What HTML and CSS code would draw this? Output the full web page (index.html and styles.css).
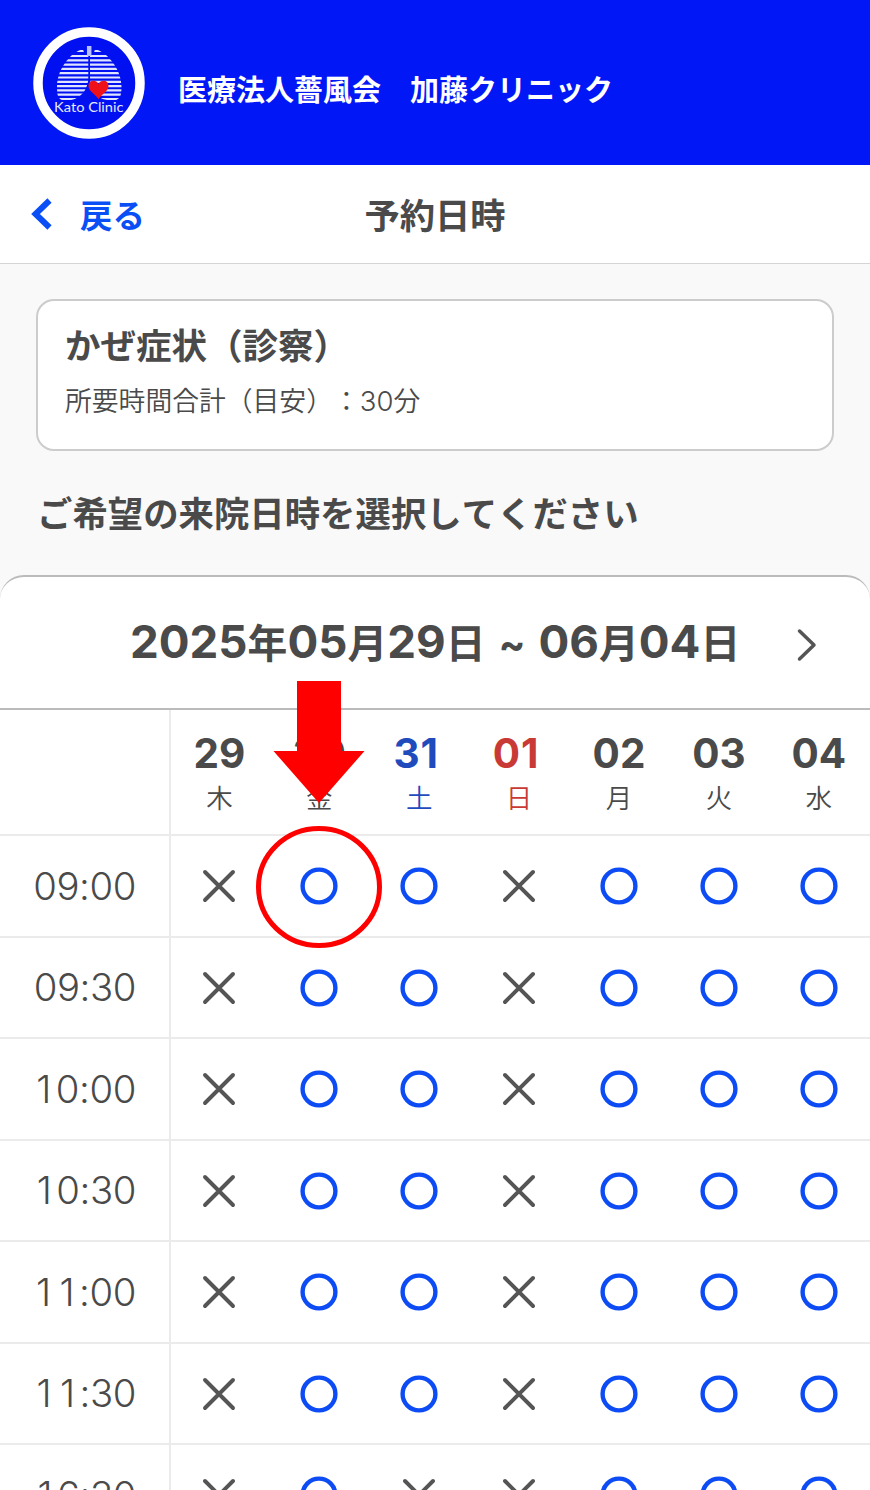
FILE: index.html
```html
<!DOCTYPE html>
<html lang="ja">
<head>
    <meta charset="UTF-8">
    <title>予約日時 | 加藤クリニック</title>
    <link rel="stylesheet" href="styles.css">
</head>
<body>
    <svg class="defs" width="0" height="0">
        <symbol id="ok" viewBox="0 0 40 40">
            <circle cx="20" cy="20" r="16.4" fill="none" stroke="#0d4cf5" stroke-width="4.4"/>
        </symbol>
        <symbol id="ng" viewBox="0 0 40 40">
            <path d="M6 6L34 34M34 6L6 34" fill="none" stroke="#555" stroke-width="3.9" stroke-linecap="round"/>
        </symbol>
    </svg>

    <header class="site-header">
        <svg class="logo" viewBox="33 27 112 112">
            <clipPath id="lungs">
                <path d="M83 49.500C75 49.500 57 66 57 87C57 96 58 100.500 66 100.500C80 100.500 88 90 88.300 78L88.300 55L85 55Z"/>
                <path d="M95 49.500C103 49.500 121.500 66 121.500 87C121.500 96 120 100.500 112 100.500C98 100.500 90.500 92 90 78L90 55L93 55Z"/>
            </clipPath>
            <circle cx="89" cy="83" r="51" fill="#0010f0" stroke="#fff" stroke-width="9.500"/>
            <path clip-path="url(#lungs)" stroke="#dfe3ff" stroke-width="2.200" d="M55 51H124M55 56H124M55 60.300H124M55 64.600H124M55 68.900H124M55 73.200H124M55 77.500H124M55 81.800H124M55 86.100H124M55 90.400H124M55 94.700H124M55 99H124"/>
            <path d="M89.200 46V56" stroke="#b9c0ff" stroke-width="4.500"/>
            <path d="M98.500 99C95 94 88.500 91 88.500 86C88.500 80 96 79 98.500 84C101 79 108.500 80 108.500 86C108.500 91 102 94 98.500 99Z" fill="#f01018"/>
            <text class="logo-text" x="54" y="111.500" textLength="69.500" lengthAdjust="spacingAndGlyphs">Kato Clinic</text>
        </svg>
        <h1>医療法人薔風会　加藤クリニック</h1>
    </header>

    <nav class="page-nav">
        <a class="back">
            <svg width="22" height="32" viewBox="0 0 22 32"><path d="M18.500 2.500L4.500 16L18.500 29.500" fill="none" stroke="#0a4ff5" stroke-width="6"/></svg>
            戻る
        </a>
        <h2>予約日時</h2>
    </nav>

    <main>
        <div class="menu-card">
            <h3>かぜ症状（診察）</h3>
            <p>所要時間合計（目安）：<span class="num">30</span>分</p>
        </div>
        <h3 class="lead">ご希望の来院日時を選択してください</h3>

        <section class="calendar">
            <div class="period">
                <p><span class="num">2025</span>年<span class="num">05</span>月<span class="num">29</span>日<span class="tilde">~</span><span class="num">06</span>月<span class="num">04</span>日</p>
                <svg class="next" width="22" height="34" viewBox="0 0 22 34"><path d="M3.500 3L18 17L3.500 31" fill="none" stroke="#555" stroke-width="3.500" stroke-linecap="round" stroke-linejoin="round"/></svg>
            </div>

            <div class="row days">
                <div class="time"></div>
                <div class="day"><b>29</b>木</div>
                <div class="day"><b>30</b>金</div>
                <div class="day sat"><b>31</b>土</div>
                <div class="day sun"><b>01</b>日</div>
                <div class="day"><b>02</b>月</div>
                <div class="day"><b>03</b>火</div>
                <div class="day"><b>04</b>水</div>
                <!-- 予約する枠の案内 -->
                <svg class="guide" width="130" height="272" viewBox="0 0 130 272">
                    <path d="M42 1H86V71H109.500L64 123L18.500 71H42Z" fill="#f00"/>
                    <ellipse cx="64" cy="207" rx="60.500" ry="58.500" fill="none" stroke="#f00" stroke-width="5"/>
                </svg>
            </div>
            <div class="row">
                <div class="time">09:00</div>
                <svg><use href="#ng"/></svg>
                <svg><use href="#ok"/></svg>
                <svg><use href="#ok"/></svg>
                <svg><use href="#ng"/></svg>
                <svg><use href="#ok"/></svg>
                <svg><use href="#ok"/></svg>
                <svg><use href="#ok"/></svg>
            </div>
            <div class="row">
                <div class="time">09:30</div>
                <svg><use href="#ng"/></svg>
                <svg><use href="#ok"/></svg>
                <svg><use href="#ok"/></svg>
                <svg><use href="#ng"/></svg>
                <svg><use href="#ok"/></svg>
                <svg><use href="#ok"/></svg>
                <svg><use href="#ok"/></svg>
            </div>
            <div class="row">
                <div class="time"><i>1</i>0:00</div>
                <svg><use href="#ng"/></svg>
                <svg><use href="#ok"/></svg>
                <svg><use href="#ok"/></svg>
                <svg><use href="#ng"/></svg>
                <svg><use href="#ok"/></svg>
                <svg><use href="#ok"/></svg>
                <svg><use href="#ok"/></svg>
            </div>
            <div class="row">
                <div class="time"><i>1</i>0:30</div>
                <svg><use href="#ng"/></svg>
                <svg><use href="#ok"/></svg>
                <svg><use href="#ok"/></svg>
                <svg><use href="#ng"/></svg>
                <svg><use href="#ok"/></svg>
                <svg><use href="#ok"/></svg>
                <svg><use href="#ok"/></svg>
            </div>
            <div class="row">
                <div class="time"><i>1</i><i>1</i>:00</div>
                <svg><use href="#ng"/></svg>
                <svg><use href="#ok"/></svg>
                <svg><use href="#ok"/></svg>
                <svg><use href="#ng"/></svg>
                <svg><use href="#ok"/></svg>
                <svg><use href="#ok"/></svg>
                <svg><use href="#ok"/></svg>
            </div>
            <div class="row">
                <div class="time"><i>1</i><i>1</i>:30</div>
                <svg><use href="#ng"/></svg>
                <svg><use href="#ok"/></svg>
                <svg><use href="#ok"/></svg>
                <svg><use href="#ng"/></svg>
                <svg><use href="#ok"/></svg>
                <svg><use href="#ok"/></svg>
                <svg><use href="#ok"/></svg>
            </div>
            <div class="row">
                <div class="time"><i>1</i>6:30</div>
                <svg><use href="#ng"/></svg>
                <svg><use href="#ok"/></svg>
                <svg><use href="#ng"/></svg>
                <svg><use href="#ng"/></svg>
                <svg><use href="#ok"/></svg>
                <svg><use href="#ok"/></svg>
                <svg><use href="#ok"/></svg>
            </div>
        </section>
    </main>
</body>
</html>
```

FILE: styles.css
```css
* {
    box-sizing: border-box;
}
body {
    margin: 0;
    height: 1490px;
    overflow: hidden;
    background: #f9f9f9;
    color: #4a4a4a;
    font-family: "Noto Sans CJK JP", sans-serif;
    font-kerning: none;
    text-spacing-trim: space-all;
}
h1, h2, h3, p {
    margin: 0;
    line-height: 1;
}
.defs {
    display: none;
}
.num, .time, .day b {
    font-family: Inter, sans-serif;
    font-feature-settings: "calt" 0;
    line-height: 1;
}

.site-header {
    display: flex;
    align-items: center;
    height: 165px;
    padding-left: 33px;
    background: #0217f5;
    color: #fff;
}
.logo {
    width: 112px;
    height: 112px;
}
.logo-text {
    font-family: Lato, sans-serif;
    font-size: 13.5px;
    font-weight: 400;
    fill: #e6e9ff;
}
.site-header h1 {
    margin-left: 33px;
    padding-top: 12px;
    font-size: 29px;
}

.page-nav {
    display: grid;
    grid-template-columns: 1fr auto 1fr;
    align-items: center;
    height: 99px;
    padding-left: 31px;
    padding-right: 31px;
    background: #fff;
    border-bottom: 1px solid #d5d5d5;
}
.back {
    display: flex;
    align-items: center;
    gap: 27px;
    color: #0a4ff5;
    font-size: 32.5px;
    font-weight: bold;
    line-height: 1;
}
.page-nav h2 {
    font-size: 35.3px;
}

.menu-card {
    height: 152px;
    margin: 35px 36px 0;
    padding: 25px 27px;
    background: #fff;
    border: 2px solid #ccc;
    border-radius: 18px;
}
.menu-card h3 {
    font-size: 35.5px;
}
.menu-card p {
    margin-top: 25px;
    font-size: 26.8px;
    font-weight: 350;
}
.menu-card .num {
    font-size: 27.5px;
}
.lead {
    margin: 43px 0 0 37px;
    font-size: 35.4px;
}

.calendar {
    margin-top: 46px;
    background: #fff;
    border-top: 2px solid #bbb;
    border-radius: 24px 24px 0 0;
}
.period {
    display: flex;
    align-items: center;
    height: 132.5px;
    padding-left: 130px;
    border-bottom: 2px solid #bbb;
}
.period p {
    width: 608px;
    padding-bottom: 1px;
    font-size: 39.8px;
    font-weight: bold;
    white-space: nowrap;
}
.period .num {
    font-size: 45.7px;
}
.tilde {
    display: inline-block;
    padding-top: 4px;
    margin: 0 13px;
    font-family: Inter, sans-serif;
    font-feature-settings: "case" 0, "calt" 0;
}
.next {
    margin: 5px 0 0 58px;
}

.row {
    display: grid;
    grid-template-columns: 171px repeat(7, 99.9px);
    align-items: center;
    justify-items: center;
    height: 101.5px;
    border-bottom: 2px solid #ebebeb;
}
.row > svg {
    width: 40px;
    height: 40px;
    margin-right: 3px;
}
.days {
    position: relative;
    height: 126.5px;
}
.time {
    display: flex;
    align-items: center;
    justify-content: flex-end;
    width: 100%;
    height: 100%;
    padding: 0 33px 1px 0;
    border-right: 2px solid #ebebeb;
    font-size: 38.3px;
    font-weight: 350;
    letter-spacing: -0.4px;
}
/* 「1」も他の数字と同じ幅で並べる */
.time i {
    width: 23.5px;
    padding-left: 4px;
    font-style: normal;
}
.day {
    margin-right: 3px;
    font-size: 26.5px;
    font-weight: 350;
    line-height: 1;
    text-align: center;
}
.day b {
    display: block;
    margin-bottom: 10px;
    font-size: 40.5px;
    font-weight: bold;
}
.sat {
    color: #1f4bbd;
}
.sun {
    color: #c93a36;
}
.sat b, .sun b {
    margin-left: -6px;
    letter-spacing: 1px;
}
.row > .guide {
    position: absolute;
    left: 255px;
    top: -30px;
    z-index: 1;
    width: 130px;
    height: 272px;
}
```
